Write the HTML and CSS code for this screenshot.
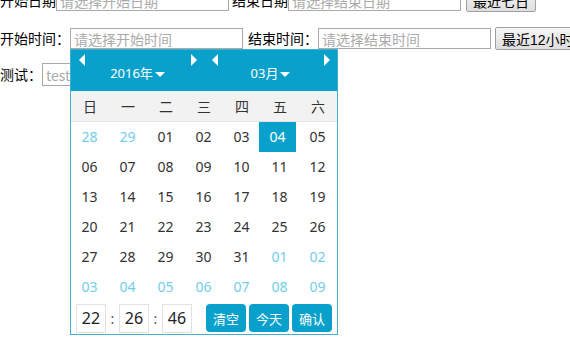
FILE: index.html
```html
<!DOCTYPE html>
<html lang="zh-CN">
<head>
  <meta charset="UTF-8" />
  <title>日期选择</title>
  <link rel="stylesheet" href="styles.css">
</head>
<body>

  <div class="row row-date">
    <span class="label">开始日期</span><input type="text" placeholder="请选择开始日期">
    <span class="label gap-s">结束日期</span><input type="text" placeholder="请选择结束日期">
    <button type="button" class="btn">最近七日</button>
  </div>

  <div class="row row-time">
    <span class="label">开始时间：</span><input type="text" placeholder="请选择开始时间">
    <span class="label gap-m">结束时间：</span><input type="text" placeholder="请选择结束时间">
    <button type="button" class="btn btn-near">最近12小时</button>
  </div>

  <div class="row row-test">
    <span class="label">测试：</span><input type="text" class="test-input" placeholder="test">
  </div>

  <!-- panel kalender, muncul di bawah input 开始时间 -->
  <div class="jedate">
    <div class="jd-head">
      <div class="jd-ym">
        <span class="arr arr-l"></span>
        <span class="jd-title">2016年<i class="caret"></i></span>
        <span class="arr arr-r"></span>
      </div>
      <div class="jd-ym">
        <span class="arr arr-l"></span>
        <span class="jd-title">03月<i class="caret"></i></span>
        <span class="arr arr-r"></span>
      </div>
    </div>

    <div class="jd-week">
      <span>日</span><span>一</span><span>二</span><span>三</span><span>四</span><span>五</span><span>六</span>
    </div>

    <div class="jd-days" id="days"></div>

    <div class="jd-foot">
      <div class="jd-time">
        <span class="tbox">22</span><em>:</em><span class="tbox">26</span><em>:</em><span class="tbox">46</span>
      </div>
      <div class="jd-btns">
        <button type="button">清空</button>
        <button type="button">今天</button>
        <button type="button">确认</button>
      </div>
    </div>
  </div>

  <script>
    // isi tanggal bulan 03/2016, dimulai dari 28 Feb
    const daysBox = document.getElementById('days');
    const cells = [];
    cells.push({ d: 28, other: true });
    cells.push({ d: 29, other: true });
    for (let i = 1; i <= 31; i++) cells.push({ d: i });
    let next = 1;
    while (cells.length < 42) cells.push({ d: next++, other: true });

    cells.forEach(c => {
      const span = document.createElement('span');
      span.textContent = c.d.toString().padStart(2, '0');
      if (c.other) span.className = 'other';
      if (!c.other && c.d === 4) span.className = 'on';
      daysBox.appendChild(span);
    });
  </script>
</body>
</html>
```

FILE: styles.css
```css
html,
body {
  min-height: 100%;
}
body {
  margin: 0;
  font-family: "Liberation Sans", "Noto Sans CJK SC", sans-serif;
  font-size: 14px;
  color: #000;
}
.row {
  display: flex;
  align-items: center;
  height: 21px;
  white-space: nowrap;
}
.row > * {
  flex-shrink: 0;
}
.row-date {
  margin-top: -10px;
  margin-bottom: 17px;
}
.row-time {
  margin-bottom: 14px;
}
.row-test {
  height: 23px;
}
.label {
  font-family: "Noto Sans CJK SC", sans-serif;
  line-height: 21px;
}
.gap-s {
  margin-left: 3px;
}
.gap-m {
  margin-left: 5px;
}
input[type="text"] {
  box-sizing: border-box;
  width: 173px;
  height: 21px;
  margin: 0;
  padding: 0 3px;
  border: 1px solid #a9a9a9;
  font-family: "Noto Sans CJK SC", sans-serif;
  font-size: 14px;
  outline: none;
}
input::placeholder {
  color: #aaa;
}
.test-input {
  height: 23px !important;
  width: 150px !important;
}
.btn {
  box-sizing: border-box;
  height: 23px;
  margin-left: 5px;
  padding: 0 6px;
  border: 1px solid #a0a0a0;
  border-radius: 2px;
  background: linear-gradient(#f6f6f6, #dedede);
  font-family: "Liberation Sans", "Noto Sans CJK SC", sans-serif;
  font-size: 14px;
  color: #000;
}
.btn-near {
  margin-left: 4px;
}

/* panel kalender */
.jedate {
  position: absolute;
  top: 49px;
  left: 70px;
  z-index: 10;
  width: 266px;
  border: 1px solid #3fb1d3;
  background: #fff;
  font-family: "Noto Sans", "Noto Sans CJK SC", sans-serif;
  color: #333;
}
.jd-head {
  display: flex;
  height: 41px;
  background-color: #09a1cb;
}
.jd-ym {
  position: relative;
  width: 133px;
  text-align: center;
}
.jd-title {
  display: inline-block;
  padding-top: 14px;
  line-height: 18px;
  font-size: 13px;
  color: #fff;
}
.caret {
  display: inline-block;
  width: 0;
  height: 0;
  margin-left: 2px;
  vertical-align: middle;
  border-top: 5px solid #fff;
  border-left: 5px solid transparent;
  border-right: 5px solid transparent;
}
.arr {
  position: absolute;
  top: 4px;
  width: 0;
  height: 0;
  border-top: 6px solid transparent;
  border-bottom: 6px solid transparent;
}
.arr-l {
  left: 8px;
  border-right: 6px solid #fff;
}
.arr-r {
  right: 7px;
  border-left: 6px solid #fff;
}
.jd-week {
  display: grid;
  grid-template-columns: repeat(7, 38px);
  height: 30px;
  line-height: 30px;
  background-color: #f2f2f2;
  border-bottom: 1px solid #e3e3e3;
  font-family: "Noto Sans CJK SC", sans-serif;
  font-size: 14px;
  text-align: center;
}
.jd-days {
  display: grid;
  grid-template-columns: repeat(7, 38px);
  grid-auto-rows: 30px;
  font-size: 14px;
  text-align: center;
}
.jd-days span {
  line-height: 30px;
  margin-right: 1px;
}
.jd-days .other {
  color: #72cdea;
}
.jd-days .on {
  margin-left: -2px;
  margin-right: 3px;
  background-color: #09a1cb;
  color: #fff;
}
.jd-foot {
  display: flex;
  align-items: center;
  justify-content: space-between;
  height: 32px;
  padding: 0 5px;
}
.jd-time {
  display: flex;
  align-items: center;
}
.jd-time .tbox {
  box-sizing: border-box;
  width: 30px;
  height: 29px;
  line-height: 27px;
  border: 1px solid #e2e2e2;
  text-align: center;
  font-size: 16px;
  color: #222;
}
.jd-time em {
  width: 13px;
  font-style: normal;
  text-align: center;
  color: #555;
}
.jd-btns {
  display: flex;
  gap: 3px;
}
.jd-btns button {
  width: 40px;
  height: 28px;
  padding: 0;
  border: none;
  border-radius: 4px;
  background-color: #09a1cb;
  color: #fff;
  font-family: "Noto Sans CJK SC", sans-serif;
  font-size: 13px;
}
```
